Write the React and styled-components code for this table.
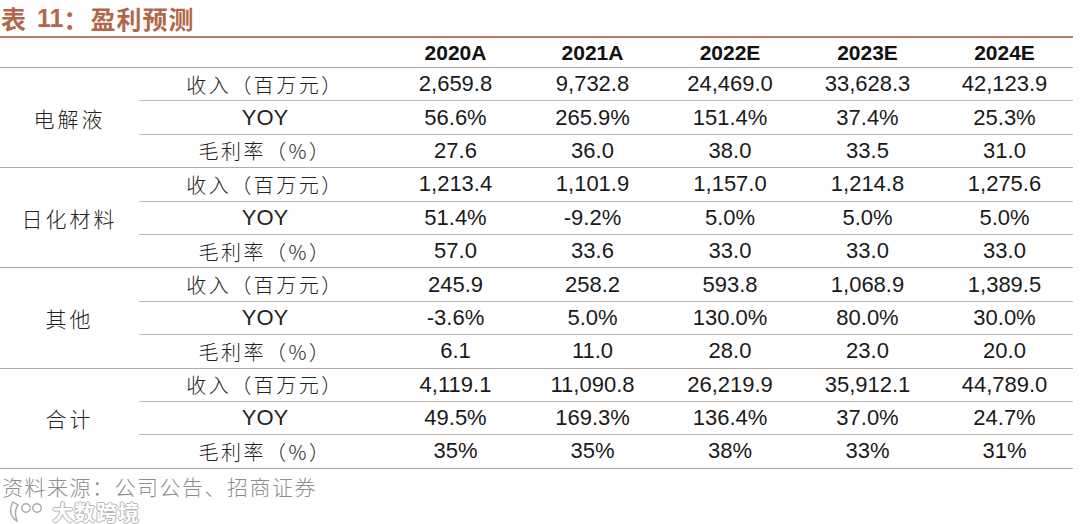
import React from "react";
import styled, { createGlobalStyle } from "styled-components";

const Global = createGlobalStyle`
  html, body { margin: 0; padding: 0; background: #fff; }
  body { font-family: "Liberation Sans", Arial, "Noto Sans CJK SC", sans-serif; }
`;

const Page = styled.div`
  position: relative;
  width: 1080px;
  height: 524px;
  overflow: hidden;
  background: #fff;
`;

const Title = styled.div`
  width: 1073px;
  height: 38px;
  box-sizing: border-box;
  border-bottom: 2px solid #b87a66;
  color: #b3674a;
  font-family: "Noto Sans CJK SC", sans-serif;
  font-weight: 700;
  font-size: 25px;
  line-height: 36px;
  padding-left: 1px;
  display: flex;
  align-items: center;
`;

const TitleNum = styled.span`
  font-family: "Liberation Sans", Arial, sans-serif;
  font-weight: 700;
  font-size: 25px;
  margin-left: 11px;
`;

const TitleText = styled.span`
  margin-left: 2px;
  letter-spacing: 1px;
`;

const Table = styled.table`
  width: 1073px;
  border-collapse: collapse;
  table-layout: fixed;
`;

const Col = styled.col`
  width: ${(p) => p.$w}px;
`;

const HeadCell = styled.th`
  height: 29px;
  padding: 0;
  border-bottom: 1px solid #bba9a0;
  font-family: "Liberation Sans", Arial, sans-serif;
  font-weight: 700;
  font-size: 21px;
  color: #111;
  text-align: center;
  vertical-align: middle;
`;

const GroupCell = styled.td`
  padding: 0;
  border-bottom: 1px solid #bba9a0;
  font-family: "Noto Sans CJK SC", sans-serif;
  font-weight: 300;
  font-size: 21px;
  letter-spacing: 3px;
  color: #222;
  text-align: center;
  vertical-align: middle;
`;

const LabelCell = styled.td`
  height: 32.4px;
  padding: 0 0 0 4px;
  border-bottom: 1px solid ${(p) => (p.$last ? "#bba9a0" : "#c4b8b2")};
  font-family: ${(p) =>
    p.$latin
      ? '"Liberation Sans", Arial, sans-serif'
      : '"Noto Sans CJK SC", sans-serif'};
  font-weight: ${(p) => (p.$latin ? 400 : 300)};
  font-size: ${(p) => (p.$latin ? "22px" : "20px")};
  letter-spacing: ${(p) => (p.$latin ? "0" : "2.5px")};
  color: #222;
  text-align: center;
  vertical-align: middle;
`;

const ValueCell = styled.td`
  padding: 0;
  border-bottom: 1px solid ${(p) => (p.$last ? "#bba9a0" : "#c4b8b2")};
  font-family: "Liberation Sans", Arial, sans-serif;
  font-size: 22px;
  color: #1a1a1a;
  text-align: center;
  vertical-align: middle;
`;

const Source = styled.div`
  margin-top: 2px;
  padding-left: 2px;
  font-family: "Noto Sans CJK SC", sans-serif;
  font-weight: 300;
  font-size: 21px;
  line-height: 30px;
  color: #8e8e8e;
  letter-spacing: 1.5px;
`;

const Watermark = styled.div`
  position: absolute;
  left: 8px;
  top: 499px;
  display: flex;
  align-items: center;
  gap: 4px;
  height: 24px;
`;

const WatermarkText = styled.span`
  font-family: "Noto Sans CJK SC", sans-serif;
  font-weight: 700;
  font-size: 21px;
  line-height: 22px;
  color: #ffffff;
  letter-spacing: 1px;
  text-shadow: -1px 0 0 #b4b4b4, 1px 0 0 #b4b4b4, 0 -1px 0 #b4b4b4,
    0 1px 0 #b4b4b4;
`;

const years = ["2020A", "2021A", "2022E", "2023E", "2024E"];
const colWidths = [139, 248, 137, 137, 138, 137, 137];

const groups = [
  {
    name: "电解液",
    rows: [
      ["2,659.8", "9,732.8", "24,469.0", "33,628.3", "42,123.9"],
      ["56.6%", "265.9%", "151.4%", "37.4%", "25.3%"],
      ["27.6", "36.0", "38.0", "33.5", "31.0"],
    ],
  },
  {
    name: "日化材料",
    rows: [
      ["1,213.4", "1,101.9", "1,157.0", "1,214.8", "1,275.6"],
      ["51.4%", "-9.2%", "5.0%", "5.0%", "5.0%"],
      ["57.0", "33.6", "33.0", "33.0", "33.0"],
    ],
  },
  {
    name: "其他",
    rows: [
      ["245.9", "258.2", "593.8", "1,068.9", "1,389.5"],
      ["-3.6%", "5.0%", "130.0%", "80.0%", "30.0%"],
      ["6.1", "11.0", "28.0", "23.0", "20.0"],
    ],
  },
  {
    name: "合计",
    rows: [
      ["4,119.1", "11,090.8", "26,219.9", "35,912.1", "44,789.0"],
      ["49.5%", "169.3%", "136.4%", "37.0%", "24.7%"],
      ["35%", "35%", "38%", "33%", "31%"],
    ],
  },
];

const labels = ["收入（百万元）", "YOY", "毛利率（%）"];

function Logo() {
  return (
    <svg width="40" height="24" viewBox="0 0 40 24">
      <g fill="#fff" stroke="#a8a8a8" strokeWidth="1.4">
        <path d="M5 3 C1 10 2 18 9 22 C7 16 7 10 10 6 Z" />
        <circle cx="18" cy="9" r="4.2" />
        <circle cx="29" cy="9" r="4.2" />
      </g>
    </svg>
  );
}

export default function App() {
  return (
    <Page>
      <Global />
      <Title>
        表<TitleNum>11</TitleNum>：<TitleText>盈利预测</TitleText>
      </Title>
      <Table>
        <colgroup>
          {colWidths.map((w, i) => (
            <Col key={i} $w={w} />
          ))}
        </colgroup>
        <thead>
          <tr>
            <HeadCell />
            <HeadCell />
            {years.map((y) => (
              <HeadCell key={y}>{y}</HeadCell>
            ))}
          </tr>
        </thead>
        <tbody>
          {groups.map((g) =>
            g.rows.map((r, i) => (
              <tr key={g.name + i}>
                {i === 0 && <GroupCell rowSpan={3}>{g.name}</GroupCell>}
                <LabelCell $last={i === 2} $latin={i === 1}>
                  {labels[i]}
                </LabelCell>
                {r.map((v, j) => (
                  <ValueCell key={j} $last={i === 2}>
                    {v}
                  </ValueCell>
                ))}
              </tr>
            ))
          )}
        </tbody>
      </Table>
      <Source>资料来源：公司公告、招商证券</Source>
      <Watermark>
        <Logo />
        <WatermarkText>大数跨境</WatermarkText>
      </Watermark>
    </Page>
  );
}
